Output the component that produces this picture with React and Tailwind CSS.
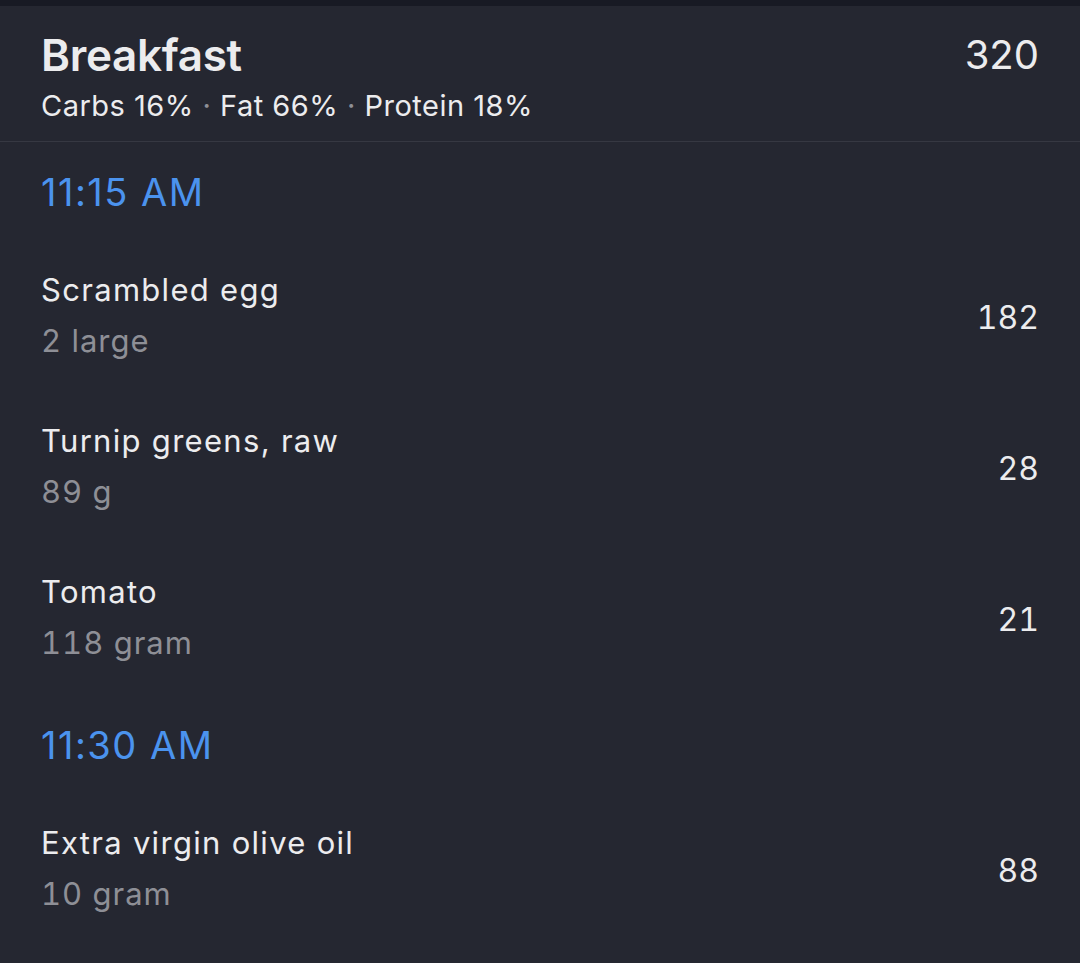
const meals = [
  {
    time: '11:15 AM',
    items: [
      { name: 'Scrambled egg', qty: '2 large', cal: 182 },
      { name: 'Turnip greens, raw', qty: '89 g', cal: 28 },
      { name: 'Tomato', qty: '118 gram', cal: 21 },
    ],
  },
  {
    time: '11:30 AM',
    items: [{ name: 'Extra virgin olive oil', qty: '10 gram', cal: 88 }],
  },
];

function FoodRow({ item }) {
  return (
    <div className="flex items-center justify-between h-[151px]">
      <div className="flex flex-col">
        <span className="text-[31px] leading-[51px] tracking-[1.3px] text-[#ececee]">{item.name}</span>
        <span className="text-[31px] leading-[51px] tracking-[1px] tabular-nums text-[#8e8f96]">{item.qty}</span>
      </div>
      <span className="text-[32px] leading-[40px] tabular-nums text-[#ececee] mt-[7px]">{item.cal}</span>
    </div>
  );
}

export default function App() {
  return (
    <div className="min-h-screen bg-[#252731]" style={{ fontFamily: 'Inter, "Noto Sans", sans-serif' }}>
      <div className="h-[6px] bg-[#181a24]" />
      <div className="px-[41px] pt-[23px] pb-[17px] border-b border-[#363842] flex items-start justify-between">
        <div>
          <div className="text-[44px] leading-[52px] font-semibold text-[#ececee] tracking-[-0.3px]">Breakfast</div>
          <div className="text-[29px] leading-[36px] mt-[7px] tracking-[0.5px] text-[#ececee]">
            Carbs 16% <span className="text-[#8e8f96]">·</span> Fat 66% <span className="text-[#8e8f96]">·</span> Protein 18%
          </div>
        </div>
        <div className="text-[40px] leading-[52px] text-[#ececee]">320</div>
      </div>
      <div className="px-[41px]">
        {meals.map((m, i) => (
          <div key={m.time} className={i === 0 ? 'pt-[26px]' : 'pt-[29px]'}>
            <div className="text-[38px] leading-[48px] tracking-[1.5px] text-[#4b93ee] mb-[23px]">{m.time}</div>
            {m.items.map((it) => (
              <FoodRow key={it.name} item={it} />
            ))}
          </div>
        ))}
      </div>
    </div>
  );
}
